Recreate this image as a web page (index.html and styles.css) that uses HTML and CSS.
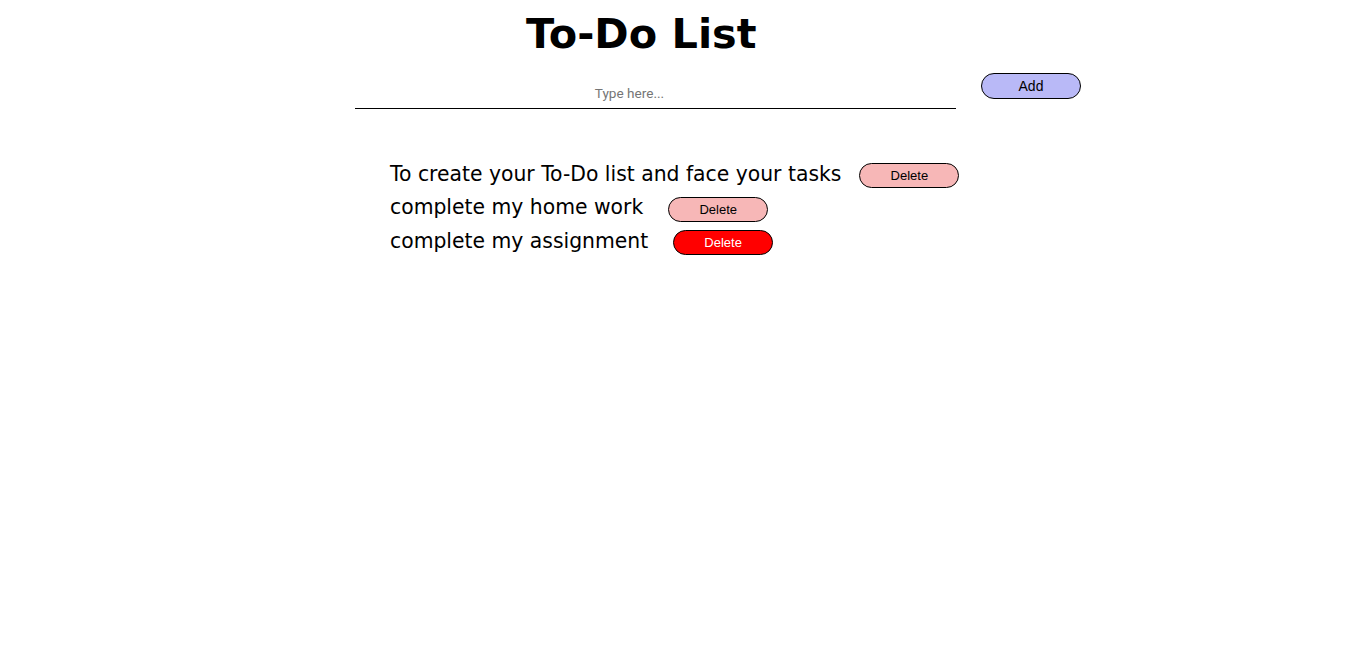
FILE: index.html
```html
<!DOCTYPE html>
<html lang="en">
<head>
<meta charset="utf-8">
<title>To-Do List</title>
<link rel="stylesheet" href="styles.css">
</head>
<body>
<div class="app">
  <h1 class="title">To-Do List</h1>
  <div class="entry">
    <input class="entry-input" type="text" placeholder="Type here...">
    <button class="btn btn-add">Add</button>
  </div>
  <ul class="tasks">
    <li class="task"><span class="task-text">To create your To-Do list and face your tasks</span><button class="btn btn-delete">Delete</button></li>
    <li class="task task-wide"><span class="task-text">complete my home work</span><button class="btn btn-delete">Delete</button></li>
    <li class="task task-wide"><span class="task-text">complete my assignment</span><button class="btn btn-delete btn-delete-active">Delete</button></li>
  </ul>
</div>
</body>
</html>
```
FILE: styles.css
```css
html, body {
  margin: 0;
  padding: 0;
  background: #fff;
}

body {
  font-family: "DejaVu Sans", Verdana, sans-serif;
  color: #000;
}

.app {
  display: flex;
  flex-direction: column;
  align-items: flex-start;
}

.title {
  margin: 8px 0 0 526px;
  font-size: 41.4px;
  font-weight: bold;
  line-height: 52px;
}

.entry {
  display: flex;
  align-items: flex-start;
  margin-top: 13px;
  margin-left: 355px;
}

.entry-input {
  width: 601px;
  height: 36px;
  box-sizing: border-box;
  border: none;
  border-bottom: 1px solid #000;
  outline: none;
  text-align: center;
  font-family: "Roboto", "Liberation Sans", sans-serif;
  font-size: 13.6px;
  padding: 4px 52px 0 0;
}

.entry-input::placeholder {
  color: #757575;
}

.btn {
  width: 100px;
  height: 26px;
  box-sizing: border-box;
  border: 1px solid #000;
  border-radius: 13px;
  font-family: "Liberation Sans", Arial, sans-serif;
  font-size: 13px;
  color: #000;
  padding: 0;
  cursor: pointer;
}

.btn-add {
  margin-left: 25px;
  background: #b9b9f7;
  font-size: 14px;
}

.tasks {
  list-style: none;
  margin: 48px 0 0 390px;
  padding: 0;
}

.task {
  display: flex;
  align-items: center;
  height: 33.5px;
}

.task-text {
  font-size: 20.35px;
}

.btn-delete {
  height: 25px;
  background: #f7b7b7;
  margin-left: 18px;
  margin-top: 4px;
}

.task-wide .btn-delete {
  margin-left: 25px;
}

.btn-delete-active {
  background: #ff0000;
  color: #fff;
}
```
